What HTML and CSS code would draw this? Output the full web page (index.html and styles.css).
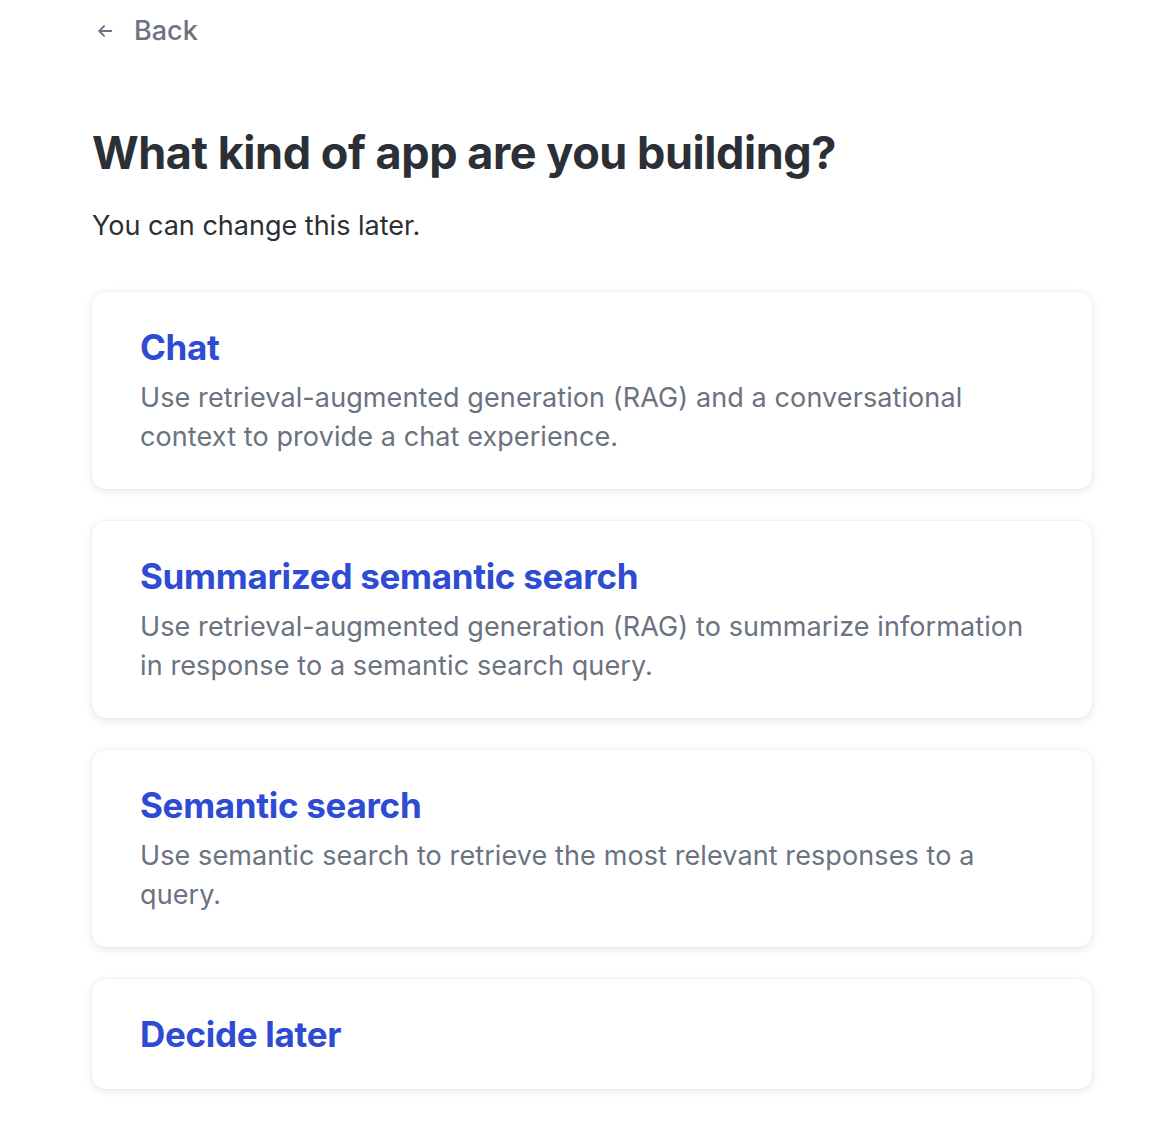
FILE: index.html
```html
<!DOCTYPE html>
<html lang="en">
<head>
    <meta charset="UTF-8">
    <meta name="viewport" content="width=device-width, initial-scale=1.0">
    <title>Choose app type</title>
    <link rel="stylesheet" href="styles.css">
</head>
<body>
    <div class="container">
        <a class="back" href="#">
            <svg class="back-icon" viewBox="0 0 20 20" width="20" height="20" fill="none" stroke="currentColor" stroke-width="2" stroke-linecap="round" stroke-linejoin="round">
                <path d="M17 10H3.5M9 4.5L3.5 10 9 15.5"/>
            </svg>
            <span>Back</span>
        </a>

        <h1>What kind of app are you building?</h1>
        <p class="subtitle">You can change this later.</p>

        <div class="options">
            <a class="option" href="#">
                <h2>Chat</h2>
                <p>Use retrieval-augmented generation (RAG) and a conversational context to provide a chat experience.</p>
            </a>
            <a class="option" href="#">
                <h2>Summarized semantic search</h2>
                <p>Use retrieval-augmented generation (RAG) to summarize information in response to a semantic search query.</p>
            </a>
            <a class="option" href="#">
                <h2>Semantic search</h2>
                <p>Use semantic search to retrieve the most relevant responses to a query.</p>
            </a>
            <a class="option" href="#">
                <h2>Decide later</h2>
            </a>
        </div>
    </div>
</body>
</html>
```

FILE: styles.css
```css
body {
    font-family: Inter, "Noto Sans", sans-serif;
    background: #fff;
    color: #2b2f36;
    margin: 0;
}

.container {
    width: 1000px;
    padding: 14px 0 40px 92px;
}

.back {
    display: inline-flex;
    align-items: center;
    gap: 20px;
    color: #6b7280;
    text-decoration: none;
    font-size: 27px;
    font-weight: 500;
    padding-left: 4px;
}

.back-icon {
    width: 18px;
    height: 18px;
}

h1 {
    margin: 78px 0 0;
    font-size: 45px;
    font-weight: 700;
    line-height: 56px;
    letter-spacing: -0.45px;
}

.subtitle {
    margin: 27px 0 0;
    font-size: 27px;
    line-height: 36px;
}

.options {
    display: flex;
    flex-direction: column;
    gap: 32px;
    margin-top: 48px;
}

.option {
    display: block;
    background: #fff;
    border-radius: 14px;
    padding: 33px 48px;
    text-decoration: none;
    box-shadow: 0 0 0 1px rgba(0, 0, 0, 0.02), 0 2px 9px rgba(0, 0, 0, 0.11);
}

.option h2 {
    margin: 0;
    color: #2e4bd4;
    font-size: 35px;
    font-weight: 650;
    line-height: 44px;
    letter-spacing: -0.3px;
}

.option p {
    margin: 9px 0 0;
    color: #6b7280;
    font-size: 27px;
    line-height: 39px;
    letter-spacing: 0.1px;
}
```
